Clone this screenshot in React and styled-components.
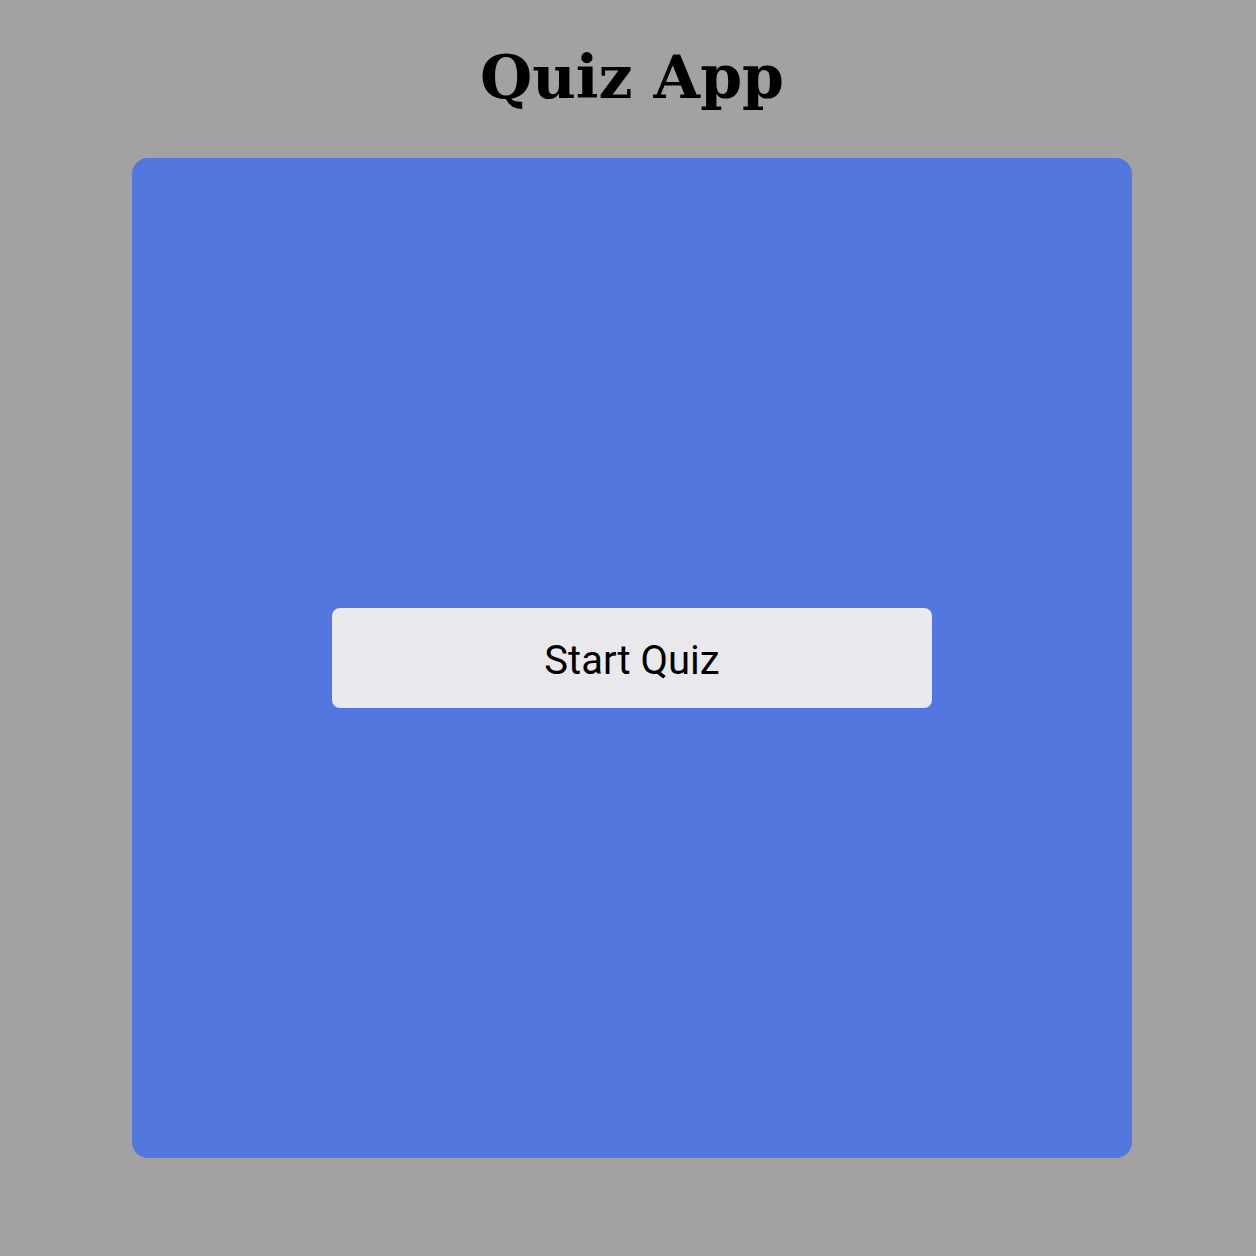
import React from "react";
import styled, { createGlobalStyle } from "styled-components";

const GlobalStyle = createGlobalStyle`
  html, body {
    margin: 0;
    padding: 0;
    background: #a3a1a2;
  }
`;

const Page = styled.div`
  min-height: 1256px;
  padding-left: 8px;
  display: flex;
  flex-direction: column;
  align-items: center;
  box-sizing: border-box;
`;

const Title = styled.h1`
  margin: 33px 0 0;
  font-family: "DejaVu Serif", serif;
  font-weight: bold;
  font-size: 60px;
  line-height: 88px;
  color: #000;
`;

const Card = styled.div`
  margin-top: 37px;
  width: 1000px;
  height: 1000px;
  border-radius: 16px;
  background: #5476df;
  display: flex;
  align-items: center;
  justify-content: center;
`;

const StartButton = styled.button`
  width: 600px;
  height: 100px;
  padding: 4px 0 0;
  border: none;
  border-radius: 8px;
  background: #e9e8ed;
  color: #000;
  font-family: Roboto, "Noto Sans", sans-serif;
  font-size: 40px;
  cursor: pointer;
`;

const App = () => {
  return (
    <Page>
      <GlobalStyle />
      <Title>Quiz App</Title>
      <Card>
        <StartButton>Start Quiz</StartButton>
      </Card>
    </Page>
  );
};

export default App;
